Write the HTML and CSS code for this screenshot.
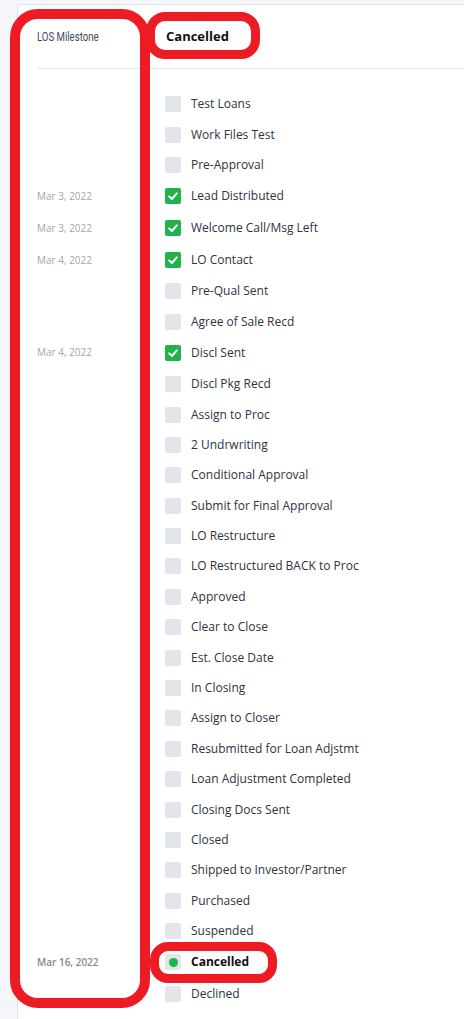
FILE: index.html
```html
<!DOCTYPE html>
<html lang="en-US">
    <head>
        <meta charset="UTF-8">
        <title>LOS Milestone</title>
        <link rel="stylesheet" href="styles.css">
    </head>
    <body>

        <div class="card">
            <div class="head">
                <div class="head-label"><span>LOS Milestone</span></div>
                <div class="head-status">Cancelled</div>
            </div>

            <ul class="steps">
                <li class="step"><span class="date"></span><span class="box"></span><span class="name">Test Loans</span></li>
                <li class="step"><span class="date"></span><span class="box"></span><span class="name">Work Files Test</span></li>
                <li class="step"><span class="date"></span><span class="box"></span><span class="name">Pre-Approval</span></li>
                <li class="step done"><span class="date">Mar 3, 2022</span><span class="box"><svg viewBox="0 0 16 16"><path d="M4.2 8.4 L6.9 11 L11.8 5.4"/></svg></span><span class="name">Lead Distributed</span></li>
                <li class="step done"><span class="date">Mar 3, 2022</span><span class="box"><svg viewBox="0 0 16 16"><path d="M4.2 8.4 L6.9 11 L11.8 5.4"/></svg></span><span class="name">Welcome Call/Msg Left</span></li>
                <li class="step done"><span class="date">Mar 4, 2022</span><span class="box"><svg viewBox="0 0 16 16"><path d="M4.2 8.4 L6.9 11 L11.8 5.4"/></svg></span><span class="name">LO Contact</span></li>
                <li class="step"><span class="date"></span><span class="box"></span><span class="name">Pre-Qual Sent</span></li>
                <li class="step"><span class="date"></span><span class="box"></span><span class="name">Agree of Sale Recd</span></li>
                <li class="step done"><span class="date">Mar 4, 2022</span><span class="box"><svg viewBox="0 0 16 16"><path d="M4.2 8.4 L6.9 11 L11.8 5.4"/></svg></span><span class="name">Discl Sent</span></li>
                <li class="step"><span class="date"></span><span class="box"></span><span class="name">Discl Pkg Recd</span></li>
                <li class="step"><span class="date"></span><span class="box"></span><span class="name">Assign to Proc</span></li>
                <li class="step"><span class="date"></span><span class="box"></span><span class="name">2 Undrwriting</span></li>
                <li class="step"><span class="date"></span><span class="box"></span><span class="name">Conditional Approval</span></li>
                <li class="step"><span class="date"></span><span class="box"></span><span class="name">Submit for Final Approval</span></li>
                <li class="step"><span class="date"></span><span class="box"></span><span class="name">LO Restructure</span></li>
                <li class="step"><span class="date"></span><span class="box"></span><span class="name">LO Restructured BACK to Proc</span></li>
                <li class="step"><span class="date"></span><span class="box"></span><span class="name">Approved</span></li>
                <li class="step"><span class="date"></span><span class="box"></span><span class="name">Clear to Close</span></li>
                <li class="step"><span class="date"></span><span class="box"></span><span class="name">Est. Close Date</span></li>
                <li class="step"><span class="date"></span><span class="box"></span><span class="name">In Closing</span></li>
                <li class="step"><span class="date"></span><span class="box"></span><span class="name">Assign to Closer</span></li>
                <li class="step"><span class="date"></span><span class="box"></span><span class="name">Resubmitted for Loan Adjstmt</span></li>
                <li class="step"><span class="date"></span><span class="box"></span><span class="name">Loan Adjustment Completed</span></li>
                <li class="step"><span class="date"></span><span class="box"></span><span class="name">Closing Docs Sent</span></li>
                <li class="step"><span class="date"></span><span class="box"></span><span class="name">Closed</span></li>
                <li class="step"><span class="date"></span><span class="box"></span><span class="name">Shipped to Investor/Partner</span></li>
                <li class="step"><span class="date"></span><span class="box"></span><span class="name">Purchased</span></li>
                <li class="step"><span class="date"></span><span class="box"></span><span class="name">Suspended</span></li>
                <li class="step current"><span class="date">Mar 16, 2022</span><span class="box"><span class="dot"></span></span><span class="name">Cancelled</span></li>
                <li class="step"><span class="date"></span><span class="box"></span><span class="name">Declined</span></li>
            </ul>
        </div>

        <!-- red markup drawn over the screenshot -->
        <div class="mark mark-column"></div>
        <div class="mark mark-head"></div>
        <div class="mark mark-current"></div>

    </body>
</html>
```

FILE: styles.css
```css
* {
    margin: 0;
    padding: 0;
    box-sizing: border-box;
}
body {
    background: #F4F6F9;
    color: #2D3340;
    font: 12px/1.5 "Open Sans", sans-serif;
    overflow: hidden;
    height: 1019px;
}
.card {
    background: #FFF;
    border: 1px solid #E0E3E8;
    border-right: 0;
    border-radius: 4px 0 0 0;
    margin: 4px 0 0 17px;
    min-height: 1030px;
}
.head {
    display: flex;
    align-items: center;
    height: 64px;
    margin-left: 19px;
    border-bottom: 1px solid #E3E5E9;
}
.head-label {
    width: 128px;
    color: #3D4B5C;
    font: 400 12px/1 Roboto, sans-serif;
}
.head-label span {
    display: inline-block;
    transform: scaleX(0.8);
    transform-origin: left center;
}
.head-status {
    padding-left: 1px;
    color: #111;
    font-size: 13px;
    font-weight: 700;
}
.steps {
    list-style: none;
    margin: 20px 0 0 19px;
}
.step {
    display: flex;
    align-items: center;
    height: 30.4px;
}
.step.done,
.step.current {
    height: 32px;
}
.date {
    width: 128px;
    color: #A5A5A5;
    font-size: 10px;
}
.current .date {
    color: #888;
    font-weight: 600;
}
.box {
    display: flex;
    align-items: center;
    justify-content: center;
    width: 16px;
    height: 16px;
    border-radius: 2px;
    background: #E2E5EA;
    margin-right: 10px;
}
.done .box {
    background: #21B24B;
}
.box svg {
    width: 16px;
    height: 16px;
    fill: none;
    stroke: #FFF;
    stroke-width: 2;
    stroke-linecap: round;
    stroke-linejoin: round;
}
.dot {
    width: 9px;
    height: 9px;
    border-radius: 50%;
    background: #1DB64A;
}
.current .name {
    color: #111;
    font-weight: 700;
}
.mark {
    position: absolute;
    border: 9px solid #ED1C24;
}
.mark-column {
    left: 10px;
    top: 9px;
    width: 140px;
    height: 999px;
    border-width: 10px;
    border-radius: 28px;
}
.mark-head {
    left: 146px;
    top: 12px;
    width: 114px;
    height: 47px;
    border-radius: 19px;
}
.mark-current {
    left: 150px;
    top: 942px;
    width: 127px;
    height: 41px;
    border-width: 9.5px;
    border-radius: 18px;
}
```
